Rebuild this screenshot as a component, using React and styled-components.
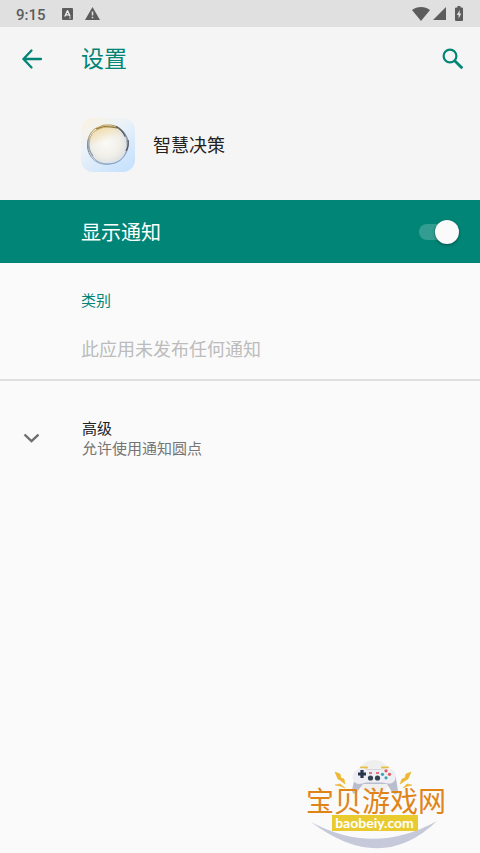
import React, { useState } from 'react';
import styled, { createGlobalStyle } from 'styled-components';

const GlobalStyle = createGlobalStyle`
  body {
    margin: 0;
    background-color: #fafafa;
    font-family: Roboto, 'Noto Sans CJK SC', sans-serif;
  }
`;

const Screen = styled.div`
  position: relative;
  display: flex;
  flex-direction: column;
  min-height: 100vh;
`;

const StatusBar = styled.div`
  display: flex;
  align-items: center;
  justify-content: space-between;
  height: 27px;
  padding: 0 17px 0 16px;
  background-color: #e0e0e0;
  color: #5c5c5c;
`;

const StatusGroup = styled.div`
  display: flex;
  align-items: center;
  gap: ${props => props.$gap};
`;

const Clock = styled.span`
  font-size: 15px;
  font-weight: 500;
  line-height: 26px;
  padding-top: 2px;
`;

const Header = styled.header`
  background-color: #f5f5f5;
`;

const AppBar = styled.div`
  display: flex;
  align-items: center;
  height: 64px;
  padding: 0 14px 0 19px;
`;

const IconButton = styled.button`
  display: flex;
  padding: 0;
  border: none;
  background: none;
  color: #008577;
  cursor: pointer;
`;

const Title = styled.h1`
  flex: 1;
  margin: 0 0 0 36px;
  padding-top: 2px;
  font-size: 23px;
  font-weight: 400;
  line-height: 32px;
  color: #008577;
`;

const AppRow = styled.div`
  display: flex;
  align-items: center;
  gap: 18px;
  padding: 27px 16px 28px 81px;
`;

const AppName = styled.span`
  padding-top: 2px;
  font-size: 18px;
  line-height: 24px;
  color: #212121;
`;

const Banner = styled.label`
  display: flex;
  align-items: center;
  justify-content: space-between;
  height: 63px;
  padding: 0 21px 0 81px;
  background-color: #008577;
  color: #fff;
  font-size: 20px;
  cursor: pointer;
`;

const Switch = styled.input`
  appearance: none;
  display: flex;
  align-items: center;
  justify-content: ${props => (props.checked ? 'flex-end' : 'flex-start')};
  width: 40px;
  height: 16px;
  margin: 0;
  border-radius: 8px;
  background: linear-gradient(#339d92, #339d92) left / 36px 16px no-repeat;
  cursor: pointer;

  &::before {
    content: '';
    width: 24px;
    height: 24px;
    flex: none;
    border-radius: 50%;
    background-color: #fafafa;
    box-shadow: 0 1px 3px rgba(0, 0, 0, 0.4);
  }
`;

const Category = styled.section`
  padding: 28px 16px 17px 81px;
  border-bottom: 2px solid #e0e0e0;
`;

const CategoryTitle = styled.h2`
  margin: 0 0 27px;
  font-size: 15px;
  font-weight: 400;
  line-height: 20px;
  color: #008577;
`;

const EmptyText = styled.p`
  margin: 0;
  font-size: 18px;
  line-height: 24px;
  color: #bcbcbc;
`;

const Advanced = styled.button`
  display: flex;
  align-items: center;
  gap: 43px;
  width: 100%;
  padding: 36px 16px 36px 23px;
  border: none;
  background: none;
  font-family: inherit;
  font-size: 15px;
  line-height: 20px;
  color: #212121;
  text-align: left;
  cursor: pointer;
`;

const AdvancedText = styled.span`
  display: flex;
  flex-direction: column;
  padding-top: 2px;
`;

const Summary = styled.span`
  color: #757575;
`;

const Watermark = styled.div`
  position: absolute;
  right: 32px;
  bottom: 4px;
  display: flex;
  flex-direction: column;
  align-items: center;
  width: 144px;
  height: 90px;
  padding-top: 32px;
  box-sizing: border-box;
`;

const WatermarkArt = styled.svg`
  position: absolute;
  top: 0;
  left: 0;
`;

const SiteName = styled.span`
  position: relative;
  font-size: 28px;
  line-height: 24px;
  white-space: nowrap;
  color: #e08418;
  text-shadow: 0 0 1px #fff;
`;

const SiteLink = styled.a`
  position: relative;
  width: 86px;
  margin-right: 3px;
  background-color: #e9cb30;
  color: #fff;
  font-family: Lato, sans-serif;
  font-size: 14px;
  font-weight: 700;
  line-height: 16px;
  text-align: center;
  text-decoration: none;
`;

const InputIcon = () => (
  <svg width="11" height="12" viewBox="0 0 11 12" aria-hidden="true">
    <rect width="11" height="12" rx="1" fill="currentColor" />
    <path d="M2.8 8.5L5.3 3h.4l2.5 5.5M3.8 6.8h3.4" fill="none" stroke="#eee" strokeWidth="1.3" />
    <path d="M7 10h2" stroke="#ccc" />
  </svg>
);

const WarningIcon = () => (
  <svg width="15" height="13" viewBox="0 0 15 13" aria-hidden="true">
    <path d="M7.5 0L15 13H0z" fill="currentColor" />
    <path d="M7.5 4.5v4M7.5 9.7v1.6" stroke="#e0e0e0" strokeWidth="1.5" />
  </svg>
);

const WifiIcon = () => (
  <svg width="18" height="14" viewBox="0 0 18 14" aria-hidden="true">
    <path d="M0 3C5-1 13-1 18 3L9 14z" fill="currentColor" />
  </svg>
);

const SignalIcon = () => (
  <svg width="13" height="13" viewBox="0 0 13 13" aria-hidden="true">
    <path d="M13 0v13H0z" fill="currentColor" />
  </svg>
);

const BatteryIcon = () => (
  <svg width="8" height="15" viewBox="0 0 8 15" aria-hidden="true">
    <path d="M2.5 0h3v1.5H7q1 0 1 1V14q0 1-1 1H1q-1 0-1-1V2.5q0-1 1-1h1.5z" fill="currentColor" />
    <path d="M4.8 3.8L1.8 9h1.8v3.7L6.3 7.5H4.5z" fill="#e0e0e0" />
  </svg>
);

const BackIcon = () => (
  <svg width="26" height="26" viewBox="0 0 26 26" aria-hidden="true">
    <path
      d="M22 13H5M12.5 4.5L4.5 13l8 8.5"
      fill="none"
      stroke="currentColor"
      strokeWidth="2.3"
      strokeLinecap="round"
    />
  </svg>
);

const SearchIcon = () => (
  <svg width="26" height="26" viewBox="0 0 26 26" aria-hidden="true">
    <g fill="none" stroke="currentColor">
      <circle cx="10" cy="10" r="6.4" strokeWidth="2.2" />
      <path d="M14.7 14.7L22.3 22.3" strokeWidth="2.8" />
    </g>
  </svg>
);

const ChevronIcon = () => (
  <svg width="16" height="10" viewBox="0 0 16 10" aria-hidden="true">
    <path d="M1.5 1.5L8.5 8.2l7-6.7" fill="none" stroke="#6e6e6e" strokeWidth="2.4" />
  </svg>
);

const AppIcon = () => (
  <svg width="54" height="54" viewBox="0 0 54 54" aria-hidden="true">
    <defs>
      <linearGradient id="tile" x1="0" y1="0" x2="0.7" y2="1">
        <stop offset="0" stopColor="#fcf2de" />
        <stop offset="0.4" stopColor="#edf3f8" />
        <stop offset="1" stopColor="#c9e2fd" />
      </linearGradient>
      <linearGradient id="ring" x1="0.3" y1="0" x2="0.7" y2="1">
        <stop offset="0" stopColor="#c9a044" />
        <stop offset="0.3" stopColor="#77797b" />
        <stop offset="0.7" stopColor="#8a9aad" />
        <stop offset="1" stopColor="#80a5d5" />
      </linearGradient>
      <radialGradient id="ball" cx="0.45" cy="0.45" r="0.55">
        <stop offset="0" stopColor="#fafaf7" />
        <stop offset="0.65" stopColor="#f1efe8" />
        <stop offset="1" stopColor="#dce0e4" />
      </radialGradient>
      <linearGradient id="glow" x1="0.3" y1="0" x2="0.45" y2="0.4">
        <stop offset="0" stopColor="#f3ce77" />
        <stop offset="1" stopColor="#f3ce77" stopOpacity="0" />
      </linearGradient>
    </defs>
    <rect width="54" height="54" rx="12" fill="url(#tile)" />
    <circle cx="27" cy="27" r="19.5" fill="url(#ball)" />
    <circle cx="27" cy="27" r="19.5" fill="url(#glow)" opacity="0.6" />
    <g fill="none" stroke="url(#ring)">
      <path
        d="M17 9.5L22 7.2Q30 6 36 8.5c5 3 9 7 11 14 1 8-2 15-8 20-6 4-16 5-22 2C10 41 6 34 6.5 26 7 18 11 11 17 9.5z"
        strokeWidth="1"
      />
      <path
        d="M16 12c5-3 12-4 18-3 7 2 12 8 12 17 1 8-4 16-12 19-8 2-17 1-22-6C7 32 7 23 10 18c1-3 3-5 6-6z"
        strokeWidth="0.7"
      />
    </g>
    <path d="M15 11q8-4 15-2l6 1" fill="none" stroke="#8e7434" strokeWidth="1" />
    <path d="M35 8.5q7 4 9 10M47 22q1 6-2 11" fill="none" stroke="#575d65" strokeWidth="1.4" />
    <path d="M7 22q-1 9 5 16" fill="none" stroke="#8fa0ae" strokeWidth="1.2" />
  </svg>
);

const GamepadArt = () => (
  <WatermarkArt width="144" height="90" viewBox="0 0 144 90" aria-hidden="true">
    <circle cx="70" cy="18" r="17" fill="#efefed" />
    <path d="M57 8.5h6M78 8.5h6" stroke="#e8bf45" strokeWidth="2" strokeLinecap="round" />
    <path
      d="M55 10h31c4 1 5 4 6 9l2 13c0 4-4 4-6 1l-5-8H59l-6 8c-2 3-5 2-5-2l3-13c0-4 1-7 4-8z"
      fill="#b9bdcd"
    />
    <path
      d="M56 9.5c4-1 6 1 8 1h12c3 0 5-2 9-1 7 1 8 10 5 13-4 4-9 1-12 1H62c-4 1-9 3-12-1-3-4-1-12 6-13z"
      fill="#eeeef3"
    />
    <path d="M58 11v8M54 15h8" stroke="#29364d" strokeWidth="3.2" />
    <circle cx="66.5" cy="19" r="2.6" fill="#334352" />
    <circle cx="73.5" cy="19" r="2.6" fill="#334352" />
    <path d="M65 14h3M72 14h3" stroke="#d94f62" strokeWidth="1.4" />
    <circle cx="82" cy="11.8" r="1.6" fill="#e45761" />
    <circle cx="85.5" cy="15.3" r="1.6" fill="#e45761" />
    <circle cx="78.5" cy="15.3" r="1.6" fill="#36a4b5" />
    <circle cx="82" cy="18.8" r="1.6" fill="#36a4b5" />
    <path
      d="M31 13l5 2 1 4 3 1 1 5-5-4-2-1zM107 13l-5 2-1 4-3 1-2 5 6-4 2-1zM31 26l5-1 5 4-5-2zM108 26l-5-1-4 4 5-2z"
      fill="#efb631"
      stroke="#efb631"
      strokeWidth="0.6"
    />
    <path d="M7 63q63 34 126-1-56 54-126 1z" fill="#c5c9d9" />
  </WatermarkArt>
);

const App = () => {
  const [showNotifications, setShowNotifications] = useState(true);

  return (
    <>
      <GlobalStyle />
      <Screen>
        <StatusBar>
          <StatusGroup $gap="16px">
            <Clock>9:15</Clock>
            <StatusGroup $gap="12px">
              <InputIcon />
              <WarningIcon />
            </StatusGroup>
          </StatusGroup>
          <StatusGroup $gap="9px">
            <StatusGroup $gap="3px">
              <WifiIcon />
              <SignalIcon />
            </StatusGroup>
            <BatteryIcon />
          </StatusGroup>
        </StatusBar>

        <Header>
          <AppBar>
            <IconButton aria-label="返回">
              <BackIcon />
            </IconButton>
            <Title>设置</Title>
            <IconButton aria-label="搜索">
              <SearchIcon />
            </IconButton>
          </AppBar>
          <AppRow>
            <AppIcon />
            <AppName>智慧决策</AppName>
          </AppRow>
        </Header>

        <main>
          <Banner>
            显示通知
            <Switch
              type="checkbox"
              role="switch"
              checked={showNotifications}
              onChange={e => setShowNotifications(e.target.checked)}
            />
          </Banner>
          <Category>
            <CategoryTitle>类别</CategoryTitle>
            <EmptyText>此应用未发布任何通知</EmptyText>
          </Category>
          <Advanced>
            <ChevronIcon />
            <AdvancedText>
              高级
              <Summary>允许使用通知圆点</Summary>
            </AdvancedText>
          </Advanced>
        </main>

        <Watermark>
          <GamepadArt />
          <SiteName>宝贝游戏网</SiteName>
          <SiteLink href="#">baobeiy.com</SiteLink>
        </Watermark>
      </Screen>
    </>
  );
};

export default App;
